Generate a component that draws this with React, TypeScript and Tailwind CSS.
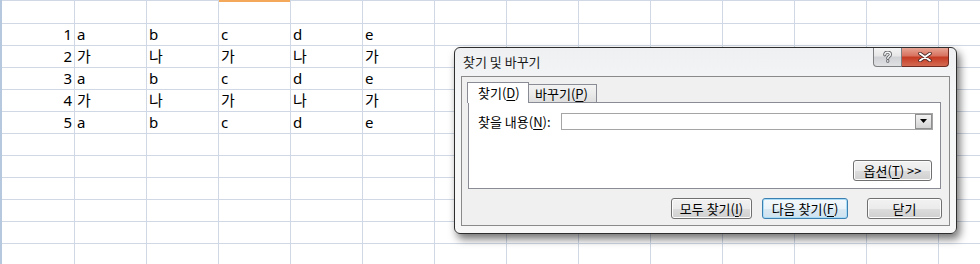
import React from "react";

const LETTERS = ["a", "b", "c", "d", "e"];
const HANGUL = ["가", "나", "가", "나", "가"];
const EXTRA_COLS = 13;

function Cell({ children, first, right }: { children?: React.ReactNode; first?: boolean; right?: boolean }) {
  return (
    <div
      className={
        (first ? "w-[73px] " : "w-[72px] ") +
        "shrink-0 h-full border-r border-[#d0d7e5] flex items-end overflow-hidden whitespace-nowrap " +
        (right ? "justify-end pr-[2px] " : "pl-[2px] ")
      }
    >
      <span className="leading-[21px]">{children}</span>
    </div>
  );
}

function Sheet() {
  const rows: React.ReactNode[][] = [];
  rows.push([]);
  for (let i = 0; i < 5; i++) {
    const vals = i % 2 === 0 ? LETTERS : HANGUL;
    rows.push([String(i + 1), ...vals]);
  }
  for (let i = 0; i < 8; i++) rows.push([]);
  return (
    <div className="flex flex-col border-l-2 border-[#b6c8de] h-full text-[15px] text-black font-['Noto_Sans','Noto_Sans_CJK_KR',sans-serif]">
      <div className="flex h-[2px] shrink-0">
        {Array.from({ length: EXTRA_COLS + 1 }).map((_, c) => (
          <div
            key={c}
            className={
              (c === 0 ? "w-[73px] " : "w-[72px] ") +
              "shrink-0 h-full border-r border-[#d0d7e5] " +
              (c === 3 ? "bg-[#f4a85a]" : "border-t bg-white")
            }
          />
        ))}
      </div>
      {rows.map((r, ri) => (
        <div key={ri} className="flex h-[22px] shrink-0 border-b border-[#d0d7e5]">
          {Array.from({ length: EXTRA_COLS + 1 }).map((_, c) => (
            <Cell key={c} first={c === 0} right={c === 0}>
              {r[c]}
            </Cell>
          ))}
        </div>
      ))}
    </div>
  );
}

function Btn({
  children,
  w,
  def,
}: {
  children: React.ReactNode;
  w: string;
  def?: boolean;
}) {
  return (
    <div
      className={
        w +
        " h-[21px] rounded-[3px] border flex items-center justify-center text-[13px] leading-none whitespace-nowrap " +
        (def
          ? "border-[#3c7fb1] shadow-[inset_0_0_0_1px_#a8dcf7] bg-[linear-gradient(#f4f9fc,#e9f3f9_50%,#dae9f3_50%,#cfe2ef)]"
          : "border-[#707070] shadow-[inset_0_0_0_1px_#fcfcfc] bg-[linear-gradient(#f2f2f2,#ebebeb_50%,#dddddd_50%,#cfcfcf)]")
      }
    >
      {children}
    </div>
  );
}

function U({ children }: { children: React.ReactNode }) {
  return <span className="underline underline-offset-[2px]">{children}</span>;
}

function Dialog() {
  const q =
    "M1.8 3.8 C1.8 2 3 1.2 4.6 1.2 C6.4 1.2 7.4 2.2 7.4 3.5 C7.4 4.8 6.5 5.3 5.6 5.9 C5 6.3 4.8 6.7 4.8 7.4 M4.8 9.8 V10.2";
  return (
    <div className="absolute left-[454px] top-[47px] w-[503px] h-[187px] rounded-[6px] border border-[#2e2e2e] bg-[linear-gradient(#eef0f2,#f6f7f8_30%,#f7f7f7)] shadow-[3px_5px_9px_rgba(0,0,0,0.55)] font-['Noto_Sans_CJK_KR',sans-serif] text-black">
      {/* title bar */}
      <div className="h-[28px] flex items-center pl-[8px] text-[13px] text-[#1b1b1b]">찾기 및 바꾸기</div>
      {/* caption buttons */}
      <div className="absolute top-0 right-[7px] h-[19px] flex">
        <div className="w-[29px] h-full rounded-bl-[4px] border border-t-0 border-[#7d7f83] bg-[linear-gradient(#f4f4f4,#e6e6e6_45%,#cfd1d4_50%,#dfe1e3)] flex items-center justify-center">
          <svg width="9" height="12" viewBox="0 0 9 12">
            <path d={q} stroke="#5f6266" strokeWidth="3.2" strokeLinecap="round" fill="none" />
            <path d={q} stroke="#f6f6f6" strokeWidth="1.4" strokeLinecap="round" fill="none" />
          </svg>
        </div>
        <div className="w-[47px] h-full rounded-br-[4px] border border-t-0 border-l-0 border-[#6e2a20] bg-[linear-gradient(#e8a595,#d7705d_45%,#c53a22_50%,#d46a52)] flex items-center justify-center">
          <svg width="14" height="10" viewBox="0 0 14 10">
            <path d="M2 1.5 L12 8.5 M12 1.5 L2 8.5" stroke="#4a2a26" strokeWidth="3.6" strokeLinecap="round" fill="none" />
            <path d="M2 1.5 L12 8.5 M12 1.5 L2 8.5" stroke="#ffffff" strokeWidth="2" strokeLinecap="round" fill="none" />
          </svg>
        </div>
      </div>
      {/* client panel */}
      <div className="mx-[6px] w-[489px] h-[150px] border border-[#8a8a8a] bg-[#f0f0f0] flex flex-col">
        <div className="pl-[5px] pt-[5px]">
          <div className="flex items-end h-[20px]">
            <div className="relative z-10 w-[62px] h-[21px] -mb-[1px] border border-b-0 border-[#898c95] bg-white text-[13px] flex items-center pl-[10px] pb-[1px] whitespace-nowrap">
              찾기(<U>D</U>)
            </div>
            <div className="w-[68px] h-[18px] border border-l-0 border-b-0 border-[#898c95] bg-[linear-gradient(#f3f3f3,#ebebeb_50%,#dedede)] text-[13px] flex items-center pl-[6px] whitespace-nowrap">
              바꾸기(<U>P</U>)
            </div>
          </div>
          <div className="ml-[1px] w-[473px] h-[87px] border border-[#898c95] bg-white flex flex-col">
            <div className="flex items-center pt-[10px] pl-[9px]">
              <div className="w-[83px] text-[13px] leading-[17px] whitespace-nowrap">
                찾을 내용(<U>N</U>):
              </div>
              <div className="w-[372px] h-[17px] border border-[#a5a5a5] bg-white flex justify-end items-center">
                <div className="w-[17px] h-[15px] border border-[#8e8f8f] bg-[linear-gradient(#f2f2f2,#e4e4e4_50%,#d4d4d4)] flex items-center justify-center">
                  <svg width="7" height="5" viewBox="0 0 7 5">
                    <path d="M0 0 H7 L3.5 4 Z" fill="#000" />
                  </svg>
                </div>
              </div>
            </div>
            <div className="mt-auto flex justify-end pr-[8px] pb-[7px]">
              <Btn w="w-[79px]">
                옵션(<U>T</U>) &gt;&gt;
              </Btn>
            </div>
          </div>
        </div>
        <div className="mt-[9px] flex justify-end pr-[7px]">
          <Btn w="w-[81px]">
            모두 찾기(<U>I</U>)
          </Btn>
          <div className="w-[10px]" />
          <Btn w="w-[86px]" def>
            다음 찾기(<U>F</U>)
          </Btn>
          <div className="w-[19px]" />
          <Btn w="w-[75px]">닫기</Btn>
        </div>
      </div>
    </div>
  );
}

export default function App() {
  return (
    <div className="relative w-[980px] h-[264px] overflow-hidden bg-white">
      <Sheet />
      <Dialog />
    </div>
  );
}
